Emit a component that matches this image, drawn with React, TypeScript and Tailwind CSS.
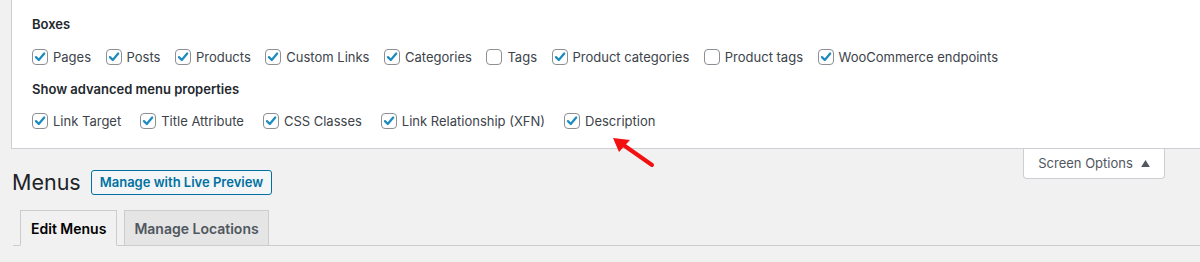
import React from "react";

const boxes = [
  { label: "Pages", checked: true },
  { label: "Posts", checked: true },
  { label: "Products", checked: true },
  { label: "Custom Links", checked: true },
  { label: "Categories", checked: true },
  { label: "Tags", checked: false },
  { label: "Product categories", checked: true },
  { label: "Product tags", checked: false },
  { label: "WooCommerce endpoints", checked: true },
];

const advanced = ["Link Target", "Title Attribute", "CSS Classes", "Link Relationship (XFN)", "Description"];

const Checkbox = ({ checked }: { checked: boolean }) => (
  <span className="flex h-4 w-4 shrink-0 items-center justify-center rounded-[4px] border border-[#8c8f94] bg-white">
    {checked && (
      <svg viewBox="0 0 16 16" className="h-4 w-4">
        <path d="M3.4 8.2 L6.6 11.4 L12.8 4" fill="none" stroke="#1e8cbe" strokeWidth="2.6" strokeLinecap="round" strokeLinejoin="round" />
      </svg>
    )}
  </span>
);

const Option = ({ label, checked }: { label: string; checked: boolean }) => (
  <label className="flex items-center gap-[5px] text-[13px] leading-5 text-[#3c434a]">
    <Checkbox checked={checked} />
    {label}
  </label>
);

export default function App() {
  return (
    <div className="relative h-[262px] w-[1200px] overflow-hidden bg-[#f1f1f1] font-['Inter',sans-serif]">
      {/* SCREEN OPTIONS PANEL */}
      <div className="ml-[11px] h-[149px] border-b border-l border-[#ccd0d4] bg-white pl-[20px] pt-[14px]">
        <h5 className="text-[13px] font-semibold leading-5 text-[#23282d]">Boxes</h5>
        <div className="mt-[13px] flex gap-[14.5px]">
          {boxes.map((b) => (
            <Option key={b.label} label={b.label} checked={b.checked} />
          ))}
        </div>
        <h5 className="mt-[12px] text-[13px] font-semibold leading-5 text-[#23282d]">Show advanced menu properties</h5>
        <div className="mt-[12px] flex gap-[19px]">
          {advanced.map((a) => (
            <Option key={a} label={a} checked />
          ))}
        </div>
      </div>

      {/* HEADER */}
      <div className="flex items-start justify-between">
        <div className="mt-[21px] flex items-center gap-[10px] pl-[12px]">
          <h1 className="text-[21.5px] font-normal leading-[25px] text-[#1d2327]">Menus</h1>
          <button className="h-[25px] rounded-[3px] border border-[#0071a1] bg-[#f3f5f6] px-[8px] text-[13px] font-semibold text-[#0071a1]">
            Manage with Live Preview
          </button>
        </div>
        <div className="mr-[35px] flex h-[30px] w-[142px] items-center justify-center gap-[8px] rounded-b-[4px] border border-t-0 border-[#ccd0d4] bg-white text-[13px] text-[#50575e]">
          Screen Options
          <svg viewBox="0 0 10 8" className="h-[7px] w-[9px]">
            <path d="M5 0 L10 8 L0 8 Z" fill="#50575e" />
          </svg>
        </div>
      </div>

      {/* TABS */}
      <div className="ml-[13px] mt-[15px] flex gap-[7px] border-b border-[#cccccc] pl-[7px]">
        <div className="-mb-px flex h-[36px] items-center border border-[#cccccc] border-b-[#f1f1f1] bg-[#f1f1f1] px-[10px] text-[14px] font-semibold text-[#000]">
          Edit Menus
        </div>
        <div className="flex h-[35px] items-center border border-b-0 border-[#cccccc] bg-[#e5e5e5] px-[9px] text-[14px] font-semibold text-[#50575e]">
          Manage Locations
        </div>
      </div>

      {/* RED ARROW */}
      <svg className="absolute left-[605px] top-[130px]" width="60" height="45" viewBox="0 0 60 45">
        <path d="M47 35 L17 14" stroke="#f21010" strokeWidth="4" strokeLinecap="round" />
        <path d="M8 8 L25 10 L14 22 Z" fill="#f21010" />
      </svg>
    </div>
  );
}
